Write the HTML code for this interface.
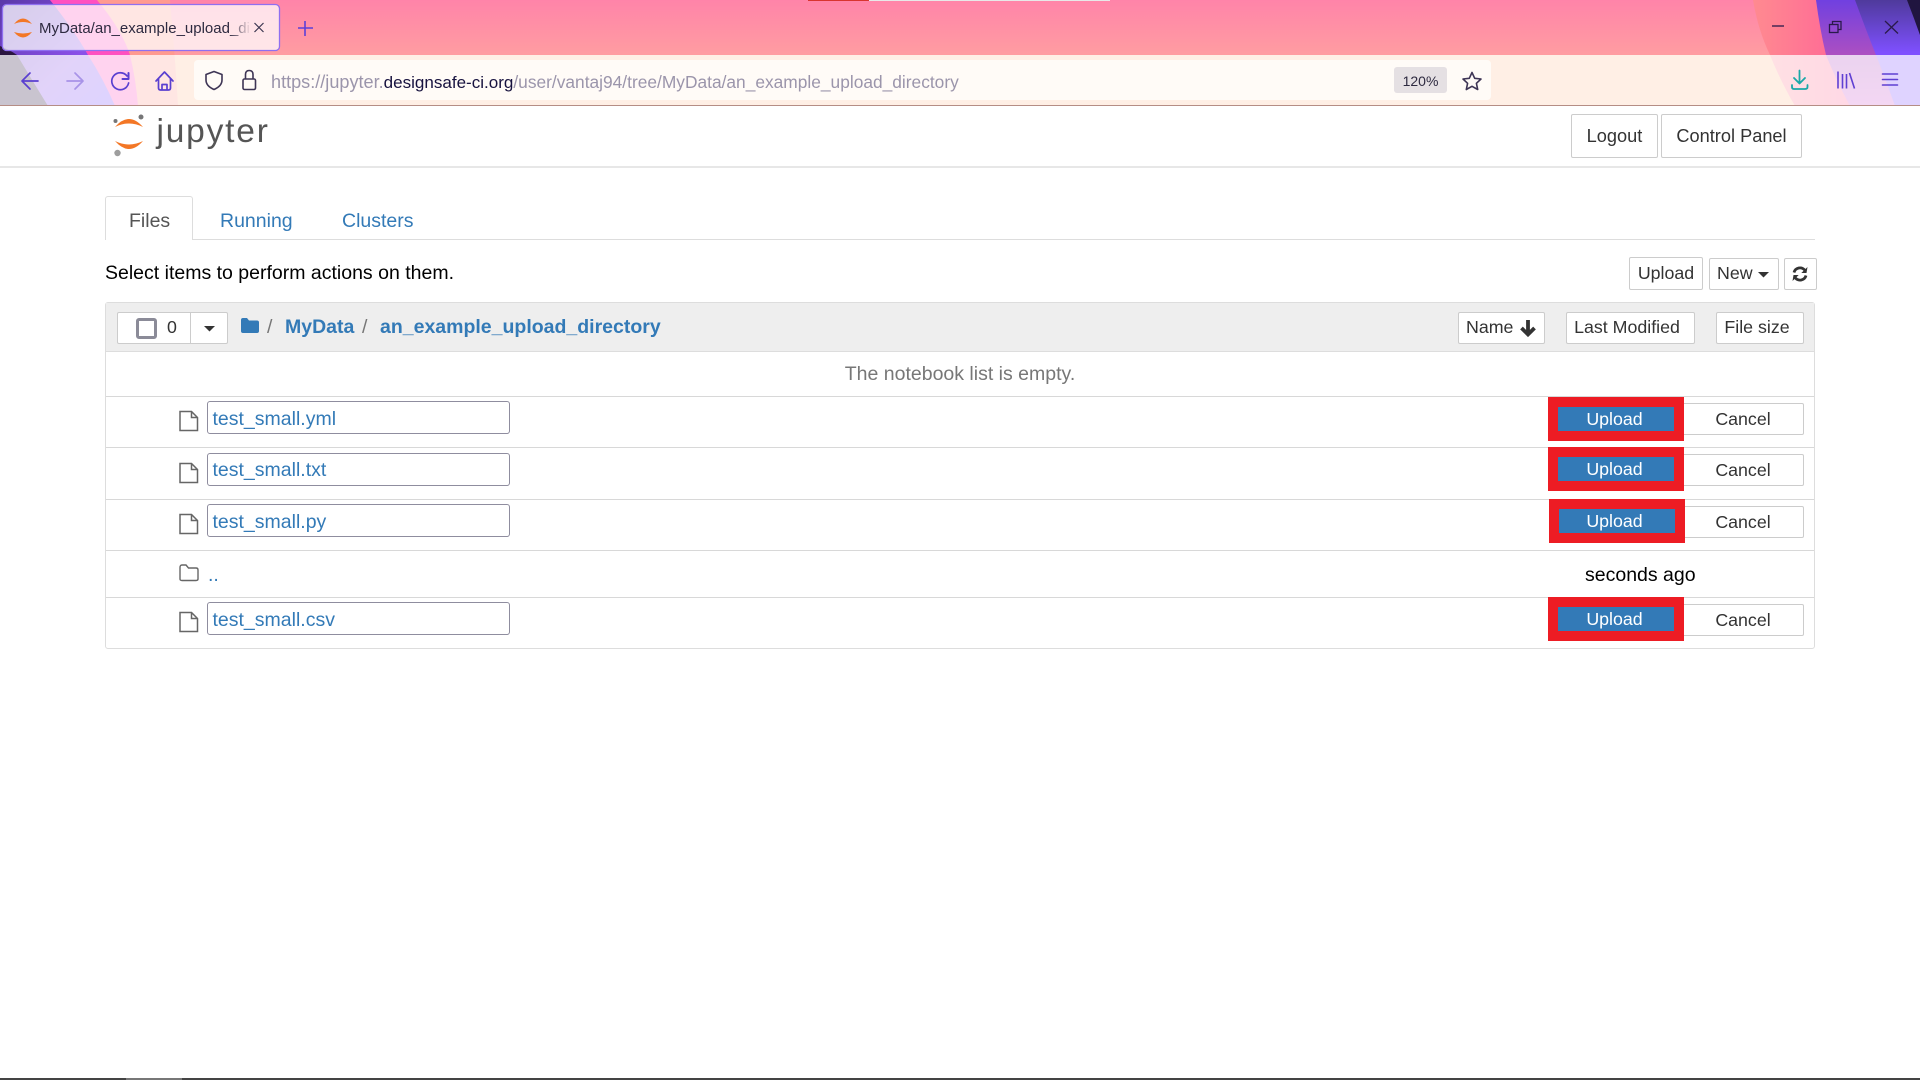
<!DOCTYPE html>
<html lang="en">
<head>
<meta charset="utf-8">
<title>MyData/an_example_upload_directory</title>
<style>
html,body{margin:0;padding:0;width:1920px;height:1080px;overflow:hidden;background:#fff;font-family:"Liberation Sans",sans-serif;color:#333}
.t{position:absolute;white-space:nowrap;line-height:1;font-size:19.5px}
.b{position:absolute;box-sizing:border-box;border:1px solid #ccc;border-radius:2px;background:#fff;display:flex;align-items:center;justify-content:center;font-size:17.8px;color:#333;white-space:nowrap;line-height:1}
.a{color:#337ab7}
.line{position:absolute;left:106px;width:1708px;height:1px;background:#d8d8d8}
.inp{position:absolute;left:207px;width:303px;height:33px;box-sizing:border-box;border:1px solid #8f8d9f;border-radius:3px;background:#fff}
.red{position:absolute;width:136px;height:44px;background:#ed1c24}
.up{position:absolute;left:10px;top:10px;width:116px;height:24px;box-sizing:border-box;padding:1px 3px 0 0;background:#337ab7;color:#fff;font-size:17.8px;display:flex;align-items:center;justify-content:center;line-height:1}
svg{position:absolute;overflow:visible}
</style>
</head>
<body>

<svg style="left:0;top:0" width="1920" height="106" viewBox="0 0 1920 106">
  <defs>
    <linearGradient id="hd" x1="0" y1="0" x2="0" y2="1"><stop offset="0" stop-color="#ff84a9"/><stop offset="1" stop-color="#ffb39a"/></linearGradient>
    <linearGradient id="pu" x1="0" y1="0" x2="1" y2="1"><stop offset="0" stop-color="#5a38a8"/><stop offset=".6" stop-color="#8a50e8"/><stop offset="1" stop-color="#7a50ff"/></linearGradient>
    <linearGradient id="hp" x1="0" y1="0" x2="1" y2="0"><stop offset="0" stop-color="#ff8a90"/><stop offset="1" stop-color="#ff4a9c"/></linearGradient>
    <linearGradient id="rp" x1="0" y1="0" x2="0" y2="1"><stop offset="0" stop-color="#7040e0"/><stop offset=".55" stop-color="#b050c0"/><stop offset="1" stop-color="#d060d0"/></linearGradient>
    <linearGradient id="rl" x1="0" y1="0" x2="0" y2="1"><stop offset="0" stop-color="#4f3a9c"/><stop offset=".5" stop-color="#7f50ff"/><stop offset="1" stop-color="#8050ff"/></linearGradient>
  </defs>
  <rect width="1920" height="106" fill="url(#hd)"/>
  <rect y="55" width="1920" height="51" fill="#ffbf98"/>
  <!-- left bands -->
  <path d="M0 0H170Q175 55 178 106H0Z" fill="#ff9a90"/>
  <path d="M0 0H97Q122 30 130 55Q136 80 138 106H0Z" fill="#ff50c0"/>
  <path d="M0 0H50Q74 30 88 55Q104 80 115 106H0Z" fill="url(#pu)"/>
  <path d="M0 46Q10 50 17 55Q32 80 48 106H0Z" fill="#2a1540"/>
  <!-- right bands -->
  <path d="M1753 0Q1758 30 1770 55Q1780 80 1795 106H1920V0Z" fill="url(#hp)"/>
  <path d="M1816 0Q1820 30 1826 55Q1836 80 1850 106H1920V0Z" fill="url(#rp)"/>
  <path d="M1855 0Q1866 30 1876 55Q1886 80 1895 106H1920V0Z" fill="url(#rl)"/>
  <path d="M1907 0Q1914 18 1920 35V0Z" fill="#20153f"/>
  <!-- top strip -->
  <rect x="808" y="0" width="61" height="1" fill="#d8352f"/>
  <rect x="869" y="0" width="241" height="1" fill="#e8e8e8"/>
  <!-- toolbar veil -->
  <rect x="0" y="55" width="1920" height="50" fill="#fff" fill-opacity=".75"/>
  <rect x="0" y="105" width="1920" height="1" fill="#b58d85"/>
  <!-- tab -->
  <rect x="2.5" y="4.5" width="277" height="46" rx="4" fill="#fff" fill-opacity=".75" stroke="#8f6ff0" stroke-width="1.3"/>
  <!-- url bar -->
  <rect x="194" y="60" width="1297" height="40" rx="4" fill="#fffbf7"/>
  <rect x="1394" y="67" width="53" height="26" rx="3" fill="#e5e0e3"/>
  <!-- favicon -->
  <path d="M14 24Q23 13 32 24Q23 20 14 24Z M14 32Q23 43 32 32Q23 35 14 32Z" fill="#f37726"/>
  <!-- tab close + plus -->
  <path d="M254.5 23L263.5 32M263.5 23L254.5 32" stroke="#3b3550" stroke-width="1.2" fill="none"/>
  <path d="M305 21V36M298 28H313" stroke="#5b3fd8" stroke-width="1.6" fill="none"/>
  <!-- nav icons -->
  <g fill="none" stroke="#5a3fd0" stroke-width="1.7" stroke-linecap="round" stroke-linejoin="round">
    <path d="M22 81H38M30 73L22 81L30 89"/>
    <path d="M67 81H83M75 73L83 81L75 89" stroke="#a893e8"/>
    <path d="M127 76A8.5 8.5 0 1 0 128.6 83"/>
    <path d="M128.5 73V79H122.5" stroke-width="2"/>
    <path d="M156 81L164.500 72L173 81M158.500 79V88Q158.500 90 160.500 90H168.500Q170.500 90 170.500 88V79M162 90V84.500H167V90"/>
  </g>
  <g fill="none" stroke="#3e3555" stroke-width="1.6" stroke-linejoin="round">
    <path d="M214 71.500L222 74.500V80Q222 86 214 89.500Q206 86 206 80V74.500Z"/>
    <rect x="243" y="79" width="12.500" height="10.500" rx="1.500"/>
    <path d="M245.500 79V74.500Q245.500 70.500 249.200 70.500Q253 70.500 253 74.500V79"/>
    <path d="M1472 72.500L1474.700 78.300L1481 79L1476.400 83.300L1477.700 89.500L1472 86.300L1466.300 89.500L1467.600 83.300L1463 79L1469.300 78.300Z"/>
  </g>
  <g fill="none" stroke="#1aa8a8" stroke-width="1.8" stroke-linecap="round" stroke-linejoin="round">
    <path d="M1799.500 70.500V83M1794 78L1799.500 83.500L1805 78"/>
    <path d="M1792 85V87Q1792 89 1794 89H1805Q1807.500 89 1807.500 87V85"/>
  </g>
  <g fill="none" stroke="#5f3fd2" stroke-width="1.6">
    <path d="M1838 71.500V88.500M1842.500 74V88.500M1846.500 74V88.500M1849.500 73L1854.500 88.500"/>
    <path d="M1882.500 74H1897.500M1882.500 79.500H1897.500M1882.500 85H1897.500" stroke-linecap="round"/>
  </g>
  <!-- window controls -->
  <g fill="none" stroke="#2a1a4a" stroke-width="1.3">
    <path d="M1772 26H1784"/>
    <rect x="1829.500" y="24.500" width="8.500" height="8"/>
    <path d="M1832.500 24V21.500H1841V29.500H1838"/>
    <path d="M1885 21L1898 33.500M1898 21L1885 33.500"/>
  </g>
</svg>

<div class="t" style="left:39px;top:20.300px;font-size:15px;color:#2e2a40;width:212px;overflow:hidden;line-height:18px;-webkit-mask-image:linear-gradient(90deg,#000 90%,transparent)">MyData/an_example_upload_di</div>
<div class="t" style="left:271px;top:72.500px;font-size:17.350px;color:#9b95ab"><span style="font-size:18.100px">https://jupyter.</span><span style="color:#17123f;font-size:17.050px">designsafe-ci.org</span>/user/vantaj94/tree/MyData/an_example_upload_directory</div>
<div class="t" style="left:1394px;top:73.500px;width:53px;text-align:center;font-size:14px;color:#2e2a40">120%</div>

<!-- Jupyter navbar -->
<svg style="left:0;top:106px" width="300" height="60" viewBox="0 106 300 60">
  <path d="M115 127Q129 111 143 127Q129 120 115 127Z M115 141Q129 157 143 141Q129 148 115 141Z" fill="#f37726"/>
  <circle cx="141" cy="117" r="2.500" fill="#767677"/>
  <circle cx="115.500" cy="121" r="2" fill="#767677"/>
  <circle cx="117.500" cy="153" r="3.200" fill="#9e9e9e"/>
</svg>
<div class="t" style="left:156.500px;top:115px;font-size:33.500px;letter-spacing:1.800px;color:#555">jupyter</div>
<div class="b" style="left:1571px;top:114px;width:87px;height:44px;font-size:18.200px">Logout</div>
<div class="b" style="left:1661px;top:114px;width:141px;height:44px;font-size:18.200px">Control Panel</div>
<div style="position:absolute;left:0;top:166px;width:1920px;height:2px;background:#e7e7e7"></div>

<!-- Tabs -->
<div style="position:absolute;left:105px;top:239px;width:1710px;height:1px;background:#ddd"></div>
<div style="position:absolute;left:105px;top:196px;width:88px;height:44px;box-sizing:border-box;border:1px solid #ddd;border-bottom:none;border-radius:3px 3px 0 0;background:#fff"></div>
<div class="t" style="left:129px;top:211.500px;color:#555">Files</div>
<div class="t a" style="left:220px;top:211.500px">Running</div>
<div class="t a" style="left:342px;top:211.500px">Clusters</div>

<div class="t" style="left:105px;top:264px;color:#000">Select items to perform actions on them.</div>

<div class="b" style="left:1629px;top:257px;width:74px;height:33px">Upload</div>
<div class="b" style="left:1709px;top:258px;width:70px;height:32px;justify-content:flex-start;padding-left:7px">New</div>
<svg style="left:1758px;top:272px" width="11" height="6" viewBox="0 0 11 6"><path d="M0 0H11L5.500 5.500Z" fill="#333"/></svg>
<div class="b" style="left:1784px;top:258px;width:33px;height:32px"></div>
<svg style="left:1792px;top:266px" width="16" height="16" viewBox="0 0 16 16">
  <path d="M2 6.500A6.200 6.200 0 0 1 12.800 4.200" fill="none" stroke="#333" stroke-width="2.800"/>
  <path d="M14.500 7H9.300L15.500 1Z" fill="#333"/>
  <path d="M14 9.500A6.200 6.200 0 0 1 3.200 11.800" fill="none" stroke="#333" stroke-width="2.800"/>
  <path d="M1.500 9H6.700L0.500 15Z" fill="#333"/>
</svg>

<!-- List panel -->
<div style="position:absolute;left:105px;top:302px;width:1710px;height:347px;box-sizing:border-box;border:1px solid #ddd;border-radius:3px;background:#fff"></div>
<div style="position:absolute;left:106px;top:303px;width:1708px;height:48px;background:#eee;border-bottom:1px solid #ddd"></div>

<div class="b" style="left:117px;top:312px;width:74px;height:32px;border-radius:2px 0 0 2px"></div>
<div class="b" style="left:190px;top:312px;width:38px;height:32px;border-radius:0 2px 2px 0"></div>
<div style="position:absolute;left:136px;top:318px;width:21px;height:20.500px;box-sizing:border-box;border:3px solid #8b8b98;border-radius:3px;background:#fff"></div>
<div class="t" style="left:167px;top:318.500px;font-size:17.800px">0</div>
<svg style="left:204px;top:326px" width="11" height="6" viewBox="0 0 11 6"><path d="M0 0H11L5.500 5.500Z" fill="#333"/></svg>
<svg style="left:241px;top:318px" width="18" height="15" viewBox="0 0 18 15"><path d="M0 2Q0 0 2 0H6L8 2.500H16Q18 2.500 18 4.500V13Q18 15 16 15H2Q0 15 0 13Z" fill="#337ab7"/></svg>
<div class="t" style="left:267px;top:318px;color:#777">/</div>
<div class="t a" style="left:285px;top:318px;font-weight:bold">MyData</div>
<div class="t" style="left:362px;top:318px;color:#777">/</div>
<div class="t a" style="left:380px;top:318px;font-weight:bold">an_example_upload_directory</div>

<div class="b" style="left:1458px;top:312px;width:87px;height:32px;justify-content:flex-start;padding-left:7px">Name</div>
<svg style="left:1519px;top:319px" width="18" height="18" viewBox="0 0 18 18"><path d="M9 1V15M2.500 9L9 15.500L15.500 9" fill="none" stroke="#333" stroke-width="3.800"/></svg>
<div class="b" style="left:1566px;top:312px;width:129px;height:32px;padding-right:7px">Last Modified</div>
<div class="b" style="left:1716px;top:312px;width:88px;height:32px;padding-right:6px">File size</div>

<div class="t" style="left:0;width:1920px;text-align:center;top:364.500px;color:#777">The notebook list is empty.</div>

<div class="line" style="top:396px"></div>
<div class="line" style="top:447px"></div>
<div class="line" style="top:499px"></div>
<div class="line" style="top:550px"></div>
<div class="line" style="top:597px"></div>

<!-- Row 1 -->
<svg style="left:179px;top:410px" width="20" height="22" viewBox="0 0 20 22"><path d="M1 1.500H12.500L18.500 7.500V20.500H1Z M12.500 1.500V7.500H18.500" fill="#fff" stroke="#666" stroke-width="1.500"/></svg>
<div class="inp" style="top:401px"></div>
<div class="t a" style="left:212.500px;top:410px">test_small.yml</div>
<div class="b" style="left:1670px;top:403px;width:134px;height:32px;padding:1px 0 0 12px">Cancel</div>
<div class="red" style="left:1548px;top:397px"><div class="up">Upload</div></div>

<!-- Row 2 -->
<svg style="left:179px;top:461.500px" width="20" height="22" viewBox="0 0 20 22"><path d="M1 1.500H12.500L18.500 7.500V20.500H1Z M12.500 1.500V7.500H18.500" fill="#fff" stroke="#666" stroke-width="1.500"/></svg>
<div class="inp" style="top:453px"></div>
<div class="t a" style="left:212.500px;top:460.500px">test_small.txt</div>
<div class="b" style="left:1670px;top:454px;width:134px;height:32px;padding:1px 0 0 12px">Cancel</div>
<div class="red" style="left:1548px;top:447px"><div class="up" style="padding-top:2px">Upload</div></div>

<!-- Row 3 -->
<svg style="left:179px;top:513px" width="20" height="22" viewBox="0 0 20 22"><path d="M1 1.500H12.500L18.500 7.500V20.500H1Z M12.500 1.500V7.500H18.500" fill="#fff" stroke="#666" stroke-width="1.500"/></svg>
<div class="inp" style="top:504px"></div>
<div class="t a" style="left:212.500px;top:513px">test_small.py</div>
<div class="b" style="left:1670px;top:506px;width:134px;height:32px;padding:1px 0 0 12px">Cancel</div>
<div class="red" style="left:1549px;top:499px"><div class="up" style="padding-right:5px">Upload</div></div>

<!-- Parent row -->
<svg style="left:179px;top:564px" width="20" height="18" viewBox="0 0 20 18"><path d="M1 3.500Q1 1 3 1H7L9.500 4H17Q19 4 19 6V15Q19 16.500 17 16.500H3Q1 16.500 1 15Z" fill="none" stroke="#666" stroke-width="1.400"/></svg>
<div class="t a" style="left:208px;top:566px">..</div>
<div class="t" style="left:1585px;top:566px;color:#000">seconds ago</div>

<!-- Row 4 -->
<svg style="left:179px;top:611px" width="20" height="22" viewBox="0 0 20 22"><path d="M1 1.500H12.500L18.500 7.500V20.500H1Z M12.500 1.500V7.500H18.500" fill="#fff" stroke="#666" stroke-width="1.500"/></svg>
<div class="inp" style="top:602px"></div>
<div class="t a" style="left:212.500px;top:611px">test_small.csv</div>
<div class="b" style="left:1670px;top:604px;width:134px;height:32px;padding:1px 0 0 12px">Cancel</div>
<div class="red" style="left:1548px;top:597px"><div class="up">Upload</div></div>

<!-- Bottom edge -->
<div style="position:absolute;left:0;top:1078px;width:1920px;height:2px;background:#444"></div>
<div style="position:absolute;left:126px;top:1078px;width:56px;height:2px;background:#777"></div>

</body>
</html>
